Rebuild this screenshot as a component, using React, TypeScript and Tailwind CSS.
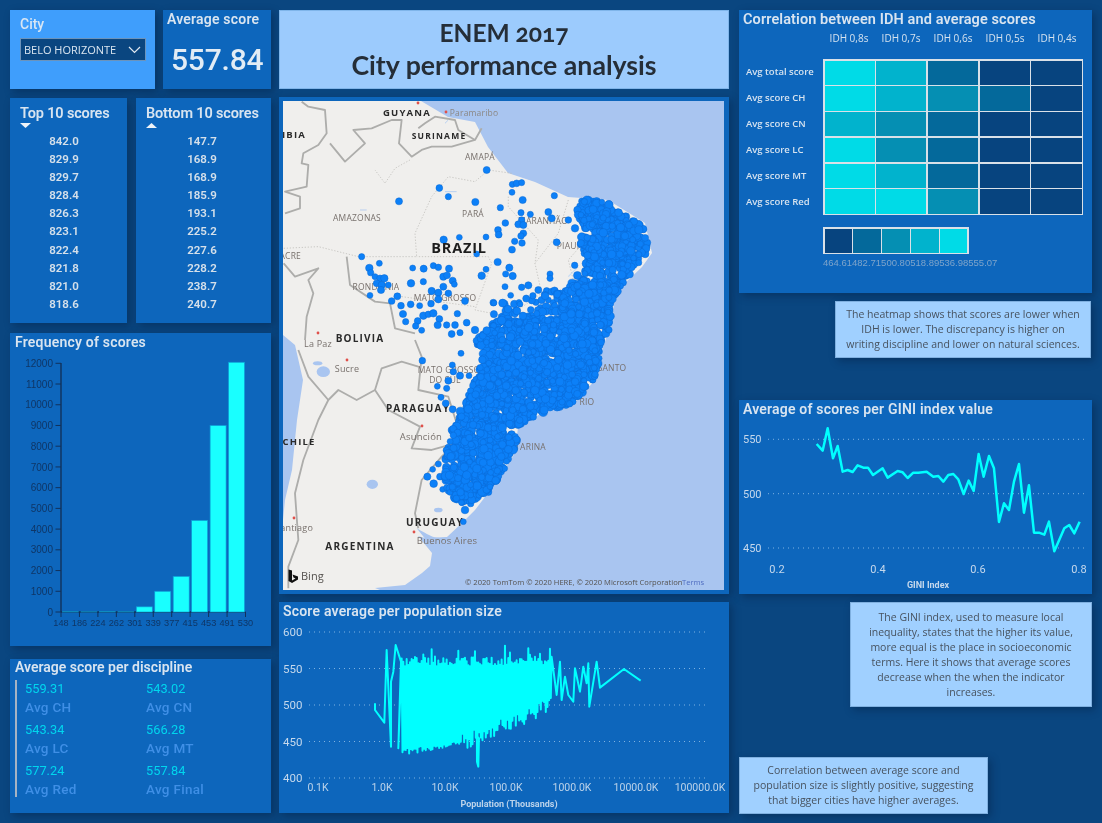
import React from "react";

function rng(seed: number) {
  return () => {
    seed |= 0;
    seed = (seed + 0x6d2b79f5) | 0;
    let t = Math.imul(seed ^ (seed >>> 15), 1 | seed);
    t = (t + Math.imul(t ^ (t >>> 7), 61 | t)) ^ t;
    return ((t ^ (t >>> 14)) >>> 0) / 4294967296;
  };
}

type P = [number, number];
const inside = (p: P, poly: P[]) => {
  let c = false;
  for (let i = 0, j = poly.length - 1; i < poly.length; j = i++) {
    const [xi, yi] = poly[i];
    const [xj, yj] = poly[j];
    if (yi > p[1] !== yj > p[1] && p[0] < ((xj - xi) * (p[1] - yi)) / (yj - yi) + xi) c = !c;
  }
  return c;
};

const polyA: P[] = [[578,199],[605,201],[644,228],[649,250],[620,287],[610,298],[600,298],[596,272],[600,252],[592,240],[594,226],[586,230],[577,216]];
const polyA2: P[] = [[578,236],[600,240],[598,258],[585,256]];
const polyB: P[] = [[562,298],[570,283],[622,285],[612,300],[609,330],[602,345],[595,378],[575,402],[535,416],[516,428],[517,450],[498,479],[480,499],[467,506],[452,497],[445,485],[444,457],[456,420],[474,383],[484,352],[474,340],[497,320],[530,322],[560,318]];
const polyC: P[] = [[488,303],[560,288],[566,322],[497,327]];
const polyD: P[] = [[586,258],[602,262],[602,288],[570,286]];

const sparseZ5: P[] = [[635,510],[712,553],[725,550],[740,548],[711,577],[743,600],[838,587],[493,564],[520,590],[372,604],[601,606],[676,623],[738,638],[766,643],[820,636],[830,655],[740,660],[691,669],[730,673],[745,675],[669,690],[671,704],[745,700],[738,708],[633,711],[553,712],[506,719],[719,724],[741,729],[845,727],[711,749],[605,762],[260,770],[668,786],[313,790],[283,804],[287,818],[413,804],[446,806],[475,797],[490,802],[522,806],[633,808],[703,803],[692,822],[713,828],[620,827],[899,796],[825,822],[825,835],[505,830],[516,826],[533,842],[300,830],[315,835],[328,835],[305,850],[320,855],[340,855],[318,870],[408,850],[445,845],[538,853],[505,860],[690,860],[740,862],[760,856],[790,870],[815,873],[830,875],[470,873],[490,878],[520,880],[285,886],[367,889],[350,903],[570,903],[707,886],[718,912],[690,910],[655,908],[820,900],[835,908],[378,917],[407,913],[434,917],[468,911],[490,898],[510,922],[384,942],[445,947],[460,943],[475,940],[547,941],[392,965],[428,963],[422,978],[440,991],[493,957],[488,975],[515,975],[540,975],[575,968],[530,1002],[555,998],[600,990],[880,660],[900,685],[930,685],[955,688],[945,655],[925,725],[938,760],[860,905],[880,880]];
const sparseZ6: P[] = [[442,62],[532,75],[558,40],[535,95],[555,107],[582,107],[520,122],[487,139],[515,145],[498,172],[512,190],[533,208],[530,270],[490,372],[473,388],[457,410],[476,431],[503,448],[529,452],[495,410],[640,456],[565,545],[570,510],[545,480]];

const dots: { x: number; y: number; r: number }[] = (() => {
  const r = rng(17);
  const out: { x: number; y: number; r: number }[] = [];
  const fill = (poly: P[], n: number) => {
    const xs = poly.map((p) => p[0]);
    const ys = poly.map((p) => p[1]);
    const [x0, x1, y0, y1] = [Math.min(...xs), Math.max(...xs), Math.min(...ys), Math.max(...ys)];
    let k = 0;
    while (k < n) {
      const p: P = [x0 + r() * (x1 - x0), y0 + r() * (y1 - y0)];
      if (inside(p, poly)) {
        out.push({ x: p[0], y: p[1], r: 2.8 + r() * 1.5 });
        k++;
      }
    }
  };
  sparseZ5.forEach((p) => out.push({ x: 275 + p[0] / 3, y: p[1] / 3, r: 2.9 + r() * 0.9 }));
  sparseZ6.forEach((p) => out.push({ x: 275 + p[0] / 3, y: 340 + p[1] / 3, r: 2.9 + r() * 1 }));
  fill(polyC, 70);
  fill(polyD, 60);
  fill(polyA, 420);
  fill(polyA2, 40);
  fill(polyB, 2100);
  return out;
})();

const popPath = (() => {
  const r = rng(5);
  const pts: P[] = [[300,325],[300,345],[328,383],[335,165],[348,455],[348,260],[355,230],[362,150],[378,200],[370,460]];
  let up = true;
  for (let x = 380; x <= 830; x += 2.5) {
    const bottom = x < 560 ? 470 - ((x - 380) / 180) * 25 + r() * 18 - 9 : 442 - ((x - 560) / 270) * 112 + (r() - 0.5) * 50;
    let top = 214 - r() * 30;
    if (r() < 0.12) top -= 10 + r() * 32;
    pts.push([x, up ? top : bottom]);
    up = !up;
    if (x === 605) { pts.push([606, 500], [610, 515], [612, 430]); }
  }
  pts.push([845,300],[855,200],[860,315],[870,245],[880,300],[895,320],[900,220],[915,290],[925,215],[935,265],[940,205],[943,335],[965,200],[975,278],[1047,222],[1097,257]);
  return pts.map((p) => p.join(",")).join(" ");
})();

const giniPts = "245,162 263,182 278,115 294,205 308,168 323,245 338,240 353,246 368,226 385,233 399,233 414,255 443,235 458,263 488,243 503,247 518,264 535,248 550,248 575,245 595,260 610,258 625,275 640,255 655,252 670,268 686,312 701,272 716,303 731,192 746,260 762,198 777,235 792,396 807,340 822,360 837,275 852,222 867,368 882,286 897,428 912,428 928,434 942,395 958,484 988,415 1003,405 1018,430 1034,395";

const din = "font-['Roboto','Liberation_Sans',sans-serif]";
const panel = "bg-[#0d66bc] shadow-[3px_3px_8px_rgba(0,20,50,0.35)]";
const note = "bg-[#a0d0ff] shadow-[3px_3px_8px_rgba(0,20,50,0.35)] border border-[#7fb0e0] text-[#47525f] text-center text-[10.5px] leading-[15px] font-['Open_Sans',sans-serif] flex items-center justify-center";
const title = "text-[#d8e4f0] font-semibold text-[14px] tracking-[0.2px]";

const top10 = ["842.0","829.9","829.7","828.4","826.3","823.1","822.4","821.8","821.0","818.6"];
const bot10 = ["147.7","168.9","168.9","185.9","193.1","225.2","227.6","228.2","238.7","240.7"];

function ScoreList({ heading, dir, rows, w, offset }: { heading: string; dir: "down" | "up"; rows: string[]; w: string; offset: string }) {
  return (
    <div className={`${panel} ${w} h-full pl-[10px] pt-[8px]`}>
      <div className="text-[#d8e4f0] font-semibold text-[14.5px] tracking-[-0.15px] leading-[16px]">{heading}</div>
      <svg width="11" height="5" viewBox="0 0 11 5" className="mt-[1px] block">
        <polygon points={dir === "down" ? "0,0 11,0 5.5,5" : "0,5 11,5 5.5,0"} fill="#eef3f8" />
      </svg>
      <div className={`flex flex-col mt-[4px] ${offset}`}>
        {rows.map((v, i) => (
          <div key={i} className="h-[18.1px] leading-[18px] text-center text-[11.5px] font-semibold text-[#d5e0ea]">{v}</div>
        ))}
      </div>
    </div>
  );
}

function Stat({ v, l }: { v: string; l: string }) {
  return (
    <div className="flex flex-col">
      <span className="text-[#00d6ee] text-[12.8px] leading-[18px]">{v}</span>
      <span className="text-[#3f8fe6] text-[13.5px] leading-[18px] font-medium tracking-[0.3px]">{l}</span>
    </div>
  );
}

const heat = [
  [5,4,2,1,1],
  [5,4,3,2,1],
  [4,3,2,1,1],
  [5,3,2,1,1],
  [5,4,2,1,1],
  [5,5,3,1,1],
];
const heatColor: Record<number, string> = { 1: "bg-[#07447f]", 2: "bg-[#04699b]", 3: "bg-[#058fb3]", 4: "bg-[#01b3cd]", 5: "bg-[#00dbe7]" };
const rowLabels = ["Avg total score","Avg score CH","Avg score CN","Avg score LC","Avg score MT","Avg score Red"];
const colLabels = ["IDH 0,8s","IDH 0,7s","IDH 0,6s","IDH 0,5s","IDH 0,4s"];

const MapLabel = ({ x, y, t, bold, size, anchor, fill, sp }: { x: number; y: number; t: string; bold?: boolean; size?: number; anchor?: "middle" | "end" | "start"; fill?: string; sp?: number }) => (
  <text x={x} y={y} textAnchor={anchor ?? "middle"} fontSize={size ?? (bold ? 9.5 : 8.5)} fontWeight={bold ? 700 : 400} fill={fill ?? (bold ? "#2a2a2a" : "#77706c")} letterSpacing={sp ?? (bold ? 1.2 : 0.2)} fontFamily="'Open Sans',sans-serif">{t}</text>
);

function BrazilMap() {
  return (
    <svg viewBox="283 101 441 489" className="block w-[441px] h-[489px]">
      <rect x="283" y="101" width="441" height="489" fill="#a9c5f0" />
      <polygon fill="#f0efed" points="283,101 421,101 448,117 475,122 488,147 508,173 535,182 568,197 608,200 645,223 652,253 642,267 625,283 615,300 608,333 602,350 595,380 575,403 542,413 518,427 515,453 498,480 475,510 462,523 447,537 425,538 418,536 432,553 430,566 422,573 405,585 375,588 380,590 283,590 283,520 285,500 292,470 297,420 303,380 295,345 283,335" />
      <g transform="translate(275,0) scale(0.3333)" fill="none" strokeLinejoin="round">
        <g stroke="#adadab" strokeWidth="5.5">
          <path d="M80,305 L100,320 L150,330 L155,400 L130,435 L85,460 L80,490 L100,495 L95,560 L30,575 L75,590 L75,625 L30,640" />
          <path d="M165,430 L210,485 L270,430 L235,390 L290,385 L350,360 L380,360 L372,430 L410,470 L440,450 L470,440 L530,440 L600,420 L620,385" />
          <path d="M430,385 L450,370 L480,350 L540,360 L550,390 L600,420" />
          <path d="M26,790 L60,830 L130,805 L100,840 L115,880 L95,950 L90,1020" />
          <path d="M215,770 L225,855 L300,905 L345,910 L360,985 L420,1000" />
        </g>
        <g stroke="#c2c1bd" strokeWidth="2.5" strokeDasharray="4 5">
          <path d="M405,480 L360,505 L330,550 L300,510 M710,520 L640,510 L600,545 L520,530 L470,590 L420,700 L425,770 L250,770 L130,740 L26,745" />
          <path d="M700,590 L700,620 L790,720 L780,790 L800,880 L700,950 L600,930 L650,790 L640,770 L425,770" />
          <path d="M880,600 L850,700 L780,790 M950,700 L880,780 L900,860 L880,960 M1010,780 L950,880 M380,890 L600,920" />
        </g>
        <path d="M510,575 L545,575 M255,630 L275,630 M510,370 L520,360" stroke="#b8d0f0" strokeWidth="3" />
        <path d="M880,830 L910,800" stroke="#c7dcf2" strokeWidth="4" />
      </g>
      <g transform="translate(275,340) scale(0.3333)" fill="none" strokeLinejoin="round">
        <g stroke="#adadab" strokeWidth="5.5">
          <path d="M420,0 L440,50 L430,150 L520,170 L545,250 L540,310" />
          <path d="M300,150 L320,85 L380,65 L430,80" />
          <path d="M70,30 L100,110 L160,180 L190,150 L245,180 L300,150 L340,210 L435,260 L410,325 L470,330 L540,310 L500,350 L440,420 L420,520 L430,565" />
          <path d="M160,180 L130,240 L85,360 L60,460 L70,600 L40,680 L40,745" />
          <path d="M500,350 L540,400 L570,490" />
        </g>
        <g fill="#a9c5f0" stroke="none">
          <ellipse cx="145" cy="95" rx="20" ry="16" />
          <ellipse cx="128" cy="70" rx="14" ry="6" />
          <ellipse cx="292" cy="433" rx="17" ry="14" />
          <ellipse cx="490" cy="510" rx="13" ry="7" />
          <path d="M425,565 C470,590 480,600 520,590 L470,620 Z" />
        </g>
      </g>
      <MapLabel x={407} y={116} t="GUYANA" bold />
      <MapLabel x={474} y={116} t="Paramaribo" size={8.5} fill="#8b8784" />
      <MapLabel x={439} y={139} t="SURINAME" bold size={8.5} />
      <MapLabel x={306} y={138} t="COLOMBIA" bold anchor="end" />
      <MapLabel x={480} y={160} t="AMAPÁ" />
      <MapLabel x={357} y={221} t="AMAZONAS" />
      <MapLabel x={473} y={217} t="PARÁ" />
      <MapLabel x={543} y={224} t="MARANHÃO" />
      <MapLabel x={568} y={249} t="PIAUÍ" />
      <MapLabel x={301} y={259} t="ACRE" anchor="end" />
      <MapLabel x={376} y={290} t="RONDÔNIA" />
      <MapLabel x={445} y={301} t="MATO GROSSO" />
      <MapLabel x={360} y={342} t="BOLIVIA" bold size={10} />
      <MapLabel x={318} y={347} t="La Paz" size={9} />
      <MapLabel x={347} y={372} t="Sucre" size={9} />
      <MapLabel x={449} y={373} t="MATO GROSSO" />
      <MapLabel x={445} y={383} t="DO SUL" />
      <MapLabel x={612} y={371} t="SANTO" anchor="middle" />
      <MapLabel x={587} y={405} t="RIO" />
      <MapLabel x={525} y={450} t="CATARINA" />
      <MapLabel x={418} y={412} t="PARAGUAY" bold size={10} />
      <MapLabel x={421} y={440} t="Asunción" size={9.5} />
      <MapLabel x={299} y={445} t="CHILE" bold size={9.5} />
      <MapLabel x={313} y={531} t="Santiago" size={9} anchor="end" />
      <MapLabel x={435} y={526} t="URUGUAY" bold size={10} />
      <MapLabel x={447} y={544} t="Buenos Aires" size={9.5} />
      <MapLabel x={360} y={550} t="ARGENTINA" bold size={10} />
      {[[418,103],[446,112],[318,333],[347,360],[422,426],[294,518],[414,532]].map(([x,y],i) => (
        <circle key={i} cx={x} cy={y} r="1.4" fill="#e0504a" />
      ))}
      <g>
        {dots.map((d, i) => (
          <circle key={i} cx={d.x} cy={d.y} r={d.r} fill="#0c80f8" stroke="#0b68d2" strokeWidth="0.5" />
        ))}
      </g>
      <MapLabel x={459} y={253} t="BRAZIL" bold size={14.5} fill="#1d1d1d" sp={0.8} />
      <path d="M288.5,569.5 L292,570.5 L292,580.5 L295.5,578.5 L293.5,577.5 L292.5,574.5 L298,576.5 L298,579.5 L292,583 L288.5,581 Z" fill="#111" />
      <text x="301" y="580" fontSize="11" fill="#55524f" fontFamily="'Open Sans',sans-serif">Bing</text>
      <text x="465" y="585" fontSize="7.6" fill="#55524f" fontFamily="'Open Sans',sans-serif">© 2020 TomTom © 2020 HERE, © 2020 Microsoft Corporation</text>
      <text x="682" y="585" fontSize="7.6" fill="#4f6cc0" fontFamily="'Open Sans',sans-serif">Terms</text>
    </svg>
  );
}

function FreqChart() {
  const vals = [12, 8, 14, 10, 250, 1000, 1720, 4420, 9000, 12050];
  const xs = ["148","186","224","262","301","339","377","415","453","491","530"];
  const y = (v: number) => 612 - (v / 12000) * 248.7;
  const ax = "#12315a";
  const lab = "#0f3666";
  return (
    <svg viewBox="10 355 261 291" className="block w-[261px] h-[291px]" fontFamily="'Liberation Sans',sans-serif">
      <line x1="61" y1="363" x2="61" y2="612" stroke={ax} strokeWidth="1.4" />
      <line x1="61" y1="612" x2="245.5" y2="612" stroke={ax} strokeWidth="1.4" />
      {Array.from({ length: 13 }, (_, i) => (
        <g key={i}>
          <line x1="55.5" x2="61" y1={y(i * 1000)} y2={y(i * 1000)} stroke={ax} strokeWidth="1" />
          <text x="53" y={y(i * 1000) + 3.6} fontSize="10" textAnchor="end" fill={lab}>{i * 1000}</text>
        </g>
      ))}
      {vals.map((v, i) => (
        <rect key={i} x={62.5 + i * 18.45} y={y(v)} width="16" height={612 - y(v)} fill="#19ffff" stroke="#0d9ad6" strokeWidth="0.7" />
      ))}
      {xs.map((t, i) => (
        <g key={t}>
          <line x1={61 + i * 18.45} x2={61 + i * 18.45} y1="612" y2="617" stroke={ax} strokeWidth="1" />
          <text x={61 + i * 18.45} y="626" fontSize="9.2" textAnchor="middle" fill={lab}>{t}</text>
        </g>
      ))}
    </svg>
  );
}

function PopChart() {
  const gy = [[600, 632], [550, 668.5], [500, 705], [450, 741.5], [400, 778]];
  const gx: [string, number][] = [["0.1K",318],["1.0K",382],["10.0K",445],["100.0K",506],["1000.0K",572],["10000.0K",636],["100000.0K",700]];
  return (
    <svg viewBox="279 626 450 187" className="block w-[450px] h-[187px]" fontFamily="'Roboto',sans-serif">
      {gy.map(([t, yy]) => (
        <g key={t}>
          <line x1="309" x2="708" y1={yy} y2={yy} stroke="#7fb2e2" strokeWidth="1" strokeDasharray="1 4" />
          <text x="283" y={yy + 4} fontSize="11.5" fill="#c5d8ec">{t}</text>
        </g>
      ))}
      {gx.map(([t, x]) => (
        <text key={t} x={x} y="791" fontSize="10.5" textAnchor="middle" fill="#bcd3ea">{t}</text>
      ))}
      <text x="509" y="807" fontSize="9" fontWeight="700" textAnchor="middle" fill="#bcd3ea">Population (Thousands)</text>
      <g transform="translate(275,595) scale(0.3333)">
        <polyline points={popPath} fill="none" stroke="#00ffff" strokeWidth="6" strokeLinejoin="round" />
      </g>
    </svg>
  );
}

function GiniChart() {
  return (
    <svg viewBox="739 422 353 172" className="block w-[353px] h-[172px]" fontFamily="'Roboto',sans-serif">
      {[[550, 439.3], [500, 493.7], [450, 548]].map(([t, yy]) => (
        <g key={t}>
          <line x1="768" x2="1087" y1={yy} y2={yy} stroke="#7fb2e2" strokeWidth="1" strokeDasharray="1 4" />
          <text x="743" y={yy + 4} fontSize="11" fill="#c5d8ec">{t}</text>
        </g>
      ))}
      {[["0.2",777],["0.4",878],["0.6",978],["0.8",1079]].map(([t, x]) => (
        <text key={t} x={x as number} y="573" fontSize="11" textAnchor="middle" fill="#c5d8ec">{t}</text>
      ))}
      <text x="928" y="588" fontSize="9" fontWeight="700" textAnchor="middle" fill="#c5d8ec">GINI Index</text>
      <g transform="translate(735,390) scale(0.3333)">
        <polyline points={giniPts} fill="none" stroke="#00ffff" strokeWidth="7.5" strokeLinejoin="round" />
      </g>
    </svg>
  );
}

export default function App() {
  return (
    <div className={`w-[1102px] h-[823px] overflow-hidden bg-[#0a4680] flex pl-[10px] pt-[10px] blur-[0.4px] ${din}`}>
      {/* left column */}
      <div className="w-[261px] shrink-0 flex flex-col">
        <div className="h-[79px] flex gap-[8px]">
          <div className="w-[145px] bg-[#3f9efc] shadow-[3px_3px_8px_rgba(0,20,50,0.35)] pl-[10px] pr-[9px] pt-[6px]">
            <div className="text-[#d8e6f4] text-[14px] font-medium leading-[16px]">City</div>
            <div className="mt-[6px] h-[23px] bg-[#0a4680] border border-[#6b93bb] flex items-center justify-between pl-[3px] pr-[4px]">
              <span className="text-[#dbe6f0] text-[11px] font-['Open_Sans',sans-serif] leading-none">BELO HORIZONTE</span>
              <svg width="13" height="8" viewBox="0 0 13 8"><path d="M1,1 L6.5,6.5 L12,1" fill="none" stroke="#e0e8f0" strokeWidth="1.2" /></svg>
            </div>
          </div>
          <div className={`${panel} w-[108px] flex flex-col pl-[4px] pt-[1px]`}>
            <div className={`${title} leading-[16px]`}>Average score</div>
            <div className="text-[#e2ecf5] text-[30px] leading-[36px] mt-[15px] ml-[4px] font-medium tracking-[-0.2px]">557.84</div>
          </div>
        </div>
        <div className="h-[225px] mt-[9px] flex gap-[9px]">
          <ScoreList heading="Top 10 scores" dir="down" rows={top10} w="w-[117px]" offset="pr-[19px]" />
          <ScoreList heading="Bottom 10 scores" dir="up" rows={bot10} w="w-[135px]" offset="pr-[13px]" />
        </div>
        <div className={`${panel} h-[313px] mt-[10px]`}>
          <div className={`${title} h-[22px] leading-[18px] pl-[5px]`}>Frequency of scores</div>
          <FreqChart />
        </div>
        <div className={`${panel} h-[154px] mt-[13px] pl-[5px]`}>
          <div className="text-[#d8e4f0] font-semibold text-[14px] tracking-[0px] leading-[17px]">Average score per discipline</div>
          <div className="mt-[4px] h-[117px] border-l-2 border-[#a5b3c4] pl-[8px] grid grid-cols-[121px_1fr] grid-rows-[41px_41px_35px]">
            <Stat v="559.31" l="Avg CH" />
            <Stat v="543.02" l="Avg CN" />
            <Stat v="543.34" l="Avg LC" />
            <Stat v="566.28" l="Avg MT" />
            <Stat v="577.24" l="Avg Red" />
            <Stat v="557.84" l="Avg Final" />
          </div>
        </div>
      </div>
      {/* center column */}
      <div className="w-[450px] shrink-0 ml-[8px] flex flex-col">
        <div className="h-[79px] bg-[#9ccbfd] border border-[#7fb5ea] flex flex-col items-center justify-center pb-[2px] text-[#252e38] text-[26.7px] leading-[33px] font-bold font-['Lato',sans-serif] oldstyle-nums">
          <div className="text-[24.5px]">ENEM 2017</div>
          <div>City performance analysis</div>
        </div>
        <div className={`${panel} h-[497px] mt-[8px] p-[4px]`}>
          <BrazilMap />
        </div>
        <div className={`${panel} h-[211px] mt-[8px]`}>
          <div className={`${title} h-[24px] leading-[18px] pl-[4px] text-[14.5px] tracking-[0.1px]`}>Score average per population size</div>
          <PopChart />
        </div>
      </div>
      {/* right column */}
      <div className="w-[353px] shrink-0 ml-[10px] flex flex-col">
        <div className={`${panel} h-[283px] pl-[4px] pt-[1px]`}>
          <div className="text-[#d8e4f0] font-semibold text-[14.5px] tracking-[0.1px] leading-[18px]">Correlation between IDH and average scores</div>
          <div className="ml-[80px] mt-[2px] grid grid-cols-5 w-[260px] text-[#d5e2ef] text-[10px] leading-[14px] text-center font-['Open_Sans',sans-serif]">
            {colLabels.map((c) => <div key={c}>{c}</div>)}
          </div>
          <div className="flex mt-[14px]">
            <div className="w-[80px] flex flex-col pl-[3px] text-[#d5e2ef] text-[9.5px] font-semibold font-['Open_Sans',sans-serif]">
              {rowLabels.map((r) => <div key={r} className="h-[26px] leading-[26px]">{r}</div>)}
            </div>
            <div className="w-[260px] h-[156px] bg-[#d9e1e8] p-[1.5px] grid grid-cols-5 grid-rows-6 gap-[1.5px]">
              {heat.flat().map((c, i) => <div key={i} className={heatColor[c]} />)}
            </div>
          </div>
          <div className="ml-[80px] mt-[12px] w-[146px] h-[27px] bg-[#d9e1e8] p-[1.5px] grid grid-cols-5 gap-[1.5px]">
            {[1,2,3,4,5].map((c) => <div key={c} className={heatColor[c]} />)}
          </div>
          <div className="ml-[80px] mt-[2px] text-[#7ea4ca] text-[9.5px] leading-[14px] font-['Liberation_Sans',sans-serif]">464.61482.71500.80518.89536.98555.07</div>
        </div>
        <div className={`${note} ml-[96px] w-[256px] h-[57px] mt-[8px]`}>
          <div>The heatmap shows that scores are lower when<br />IDH is lower. The discrepancy is higher on<br />writing discipline and lower on natural sciences.</div>
        </div>
        <div className={`${panel} h-[194px] mt-[42px]`}>
          <div className={`${title} h-[22px] leading-[18px] pl-[4px] text-[14.5px] tracking-[0.1px]`}>Average of scores per GINI index value</div>
          <GiniChart />
        </div>
        <div className={`${note} ml-[111px] w-[242px] h-[105px] mt-[8px]`}>
          <div>The GINI index, used to measure local<br />inequality, states that the higher its value,<br />more equal is the place in socioeconomic<br />terms. Here it shows that average scores<br />decrease when the when the indicator<br />increases.</div>
        </div>
        <div className={`${note} w-[249px] h-[57px] mt-[50px]`}>
          <div>Correlation between average score and<br />population size is slightly positive, suggesting<br />that bigger cities have higher averages.</div>
        </div>
      </div>
    </div>
  );
}
